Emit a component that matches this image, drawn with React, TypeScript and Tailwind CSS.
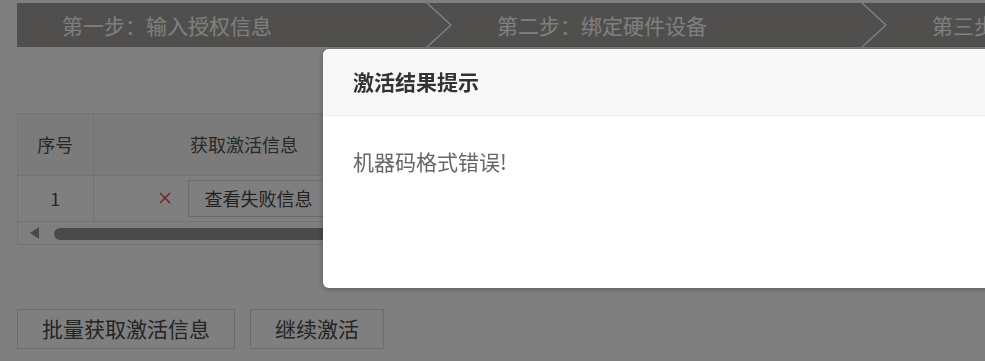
import React from "react";

const steps = ["第一步：输入授权信息", "第二步：绑定硬件设备", "第三步：激活完成"];

function StepBar() {
  return (
    <div className="flex h-[44px] w-[1400px] bg-[#a09f9c]">
      {steps.map((label, i) => (
        <div key={label} className="flex w-[435px] shrink-0 items-center justify-between pl-[45px]">
          <span className="text-[21px] leading-none text-white">{label}</span>
          {i < steps.length - 1 ? (
            <svg width="26" height="44" viewBox="0 0 26 44" className="shrink-0">
              <polyline points="1,0 25,22 1,44" fill="none" stroke="#ffffff" strokeWidth="1.5" />
            </svg>
          ) : null}
        </div>
      ))}
    </div>
  );
}

function ResultTable() {
  return (
    <div className="mt-[66px] w-[950px] border border-[#e6e6e6] text-[18px] text-[#505050]">
      <table className="w-full border-collapse">
        <thead>
          <tr className="h-[61px] bg-[#f7f7f7]">
            <th className="w-[75px] border-r border-b border-[#e6e6e6] font-normal">序号</th>
            <th className="w-[302px] border-r border-b border-[#e6e6e6] font-normal">获取激活信息</th>
            <th className="border-r border-b border-[#e6e6e6] font-normal">机器码</th>
            <th className="border-b border-[#e6e6e6] font-normal">授权码</th>
          </tr>
        </thead>
        <tbody>
          <tr className="h-[46px]">
            <td className="border-r border-b border-[#e6e6e6] text-center">1</td>
            <td className="border-r border-b border-[#e6e6e6]">
              <div className="flex items-center justify-center gap-[17px]">
                <svg width="12" height="12" viewBox="0 0 12 12">
                  <path d="M1 1 L11 11 M11 1 L1 11" stroke="#e0393e" strokeWidth="1.4" />
                </svg>
                <button className="h-[37px] border border-[#d6d6d6] bg-white px-[16px] text-[18px] text-[#444]">
                  查看失败信息
                </button>
              </div>
            </td>
            <td className="border-r border-b border-[#e6e6e6]" />
            <td className="border-b border-[#e6e6e6]" />
          </tr>
        </tbody>
      </table>
      <div className="flex h-[22px] items-center">
        <div className="ml-[12px] h-0 w-0 border-y-[6px] border-r-[9px] border-y-transparent border-r-[#959595]" />
        <div className="ml-[15px] mt-[2px] h-[12px] w-[700px] rounded-full bg-[#959595]" />
      </div>
    </div>
  );
}

export default function App() {
  return (
    <div className="relative h-[361px] w-[985px] overflow-hidden bg-white font-['Noto_Sans_CJK_SC','Noto_Sans',sans-serif]">
      <div className="pl-[17px] pt-[3px]">
        <StepBar />
        <ResultTable />
        <div className="mt-[64px] flex gap-[15px]">
          <button className="h-[40px] border border-[#d8d8d8] bg-white px-[24px] text-[21px] text-[#4a4a4a]">
            批量获取激活信息
          </button>
          <button className="h-[40px] border border-[#d8d8d8] bg-white px-[24px] text-[21px] text-[#4a4a4a]">
            继续激活
          </button>
        </div>
      </div>

      <div className="fixed inset-0 bg-black/50" />

      <div className="fixed left-[323px] top-[49px] h-[239px] w-[700px] overflow-hidden rounded-l-[6px] bg-white shadow-[0_1px_6px_rgba(0,0,0,0.3)]">
        <div className="flex h-[67px] items-center border-b border-[#eeeeee] bg-[#f8f8f8] pl-[30px] text-[21px] font-bold text-[#333]">
          激活结果提示
        </div>
        <div className="pl-[30px] pt-[30px] text-[21px] leading-[30px] text-[#666]">机器码格式错误!</div>
      </div>
    </div>
  );
}
